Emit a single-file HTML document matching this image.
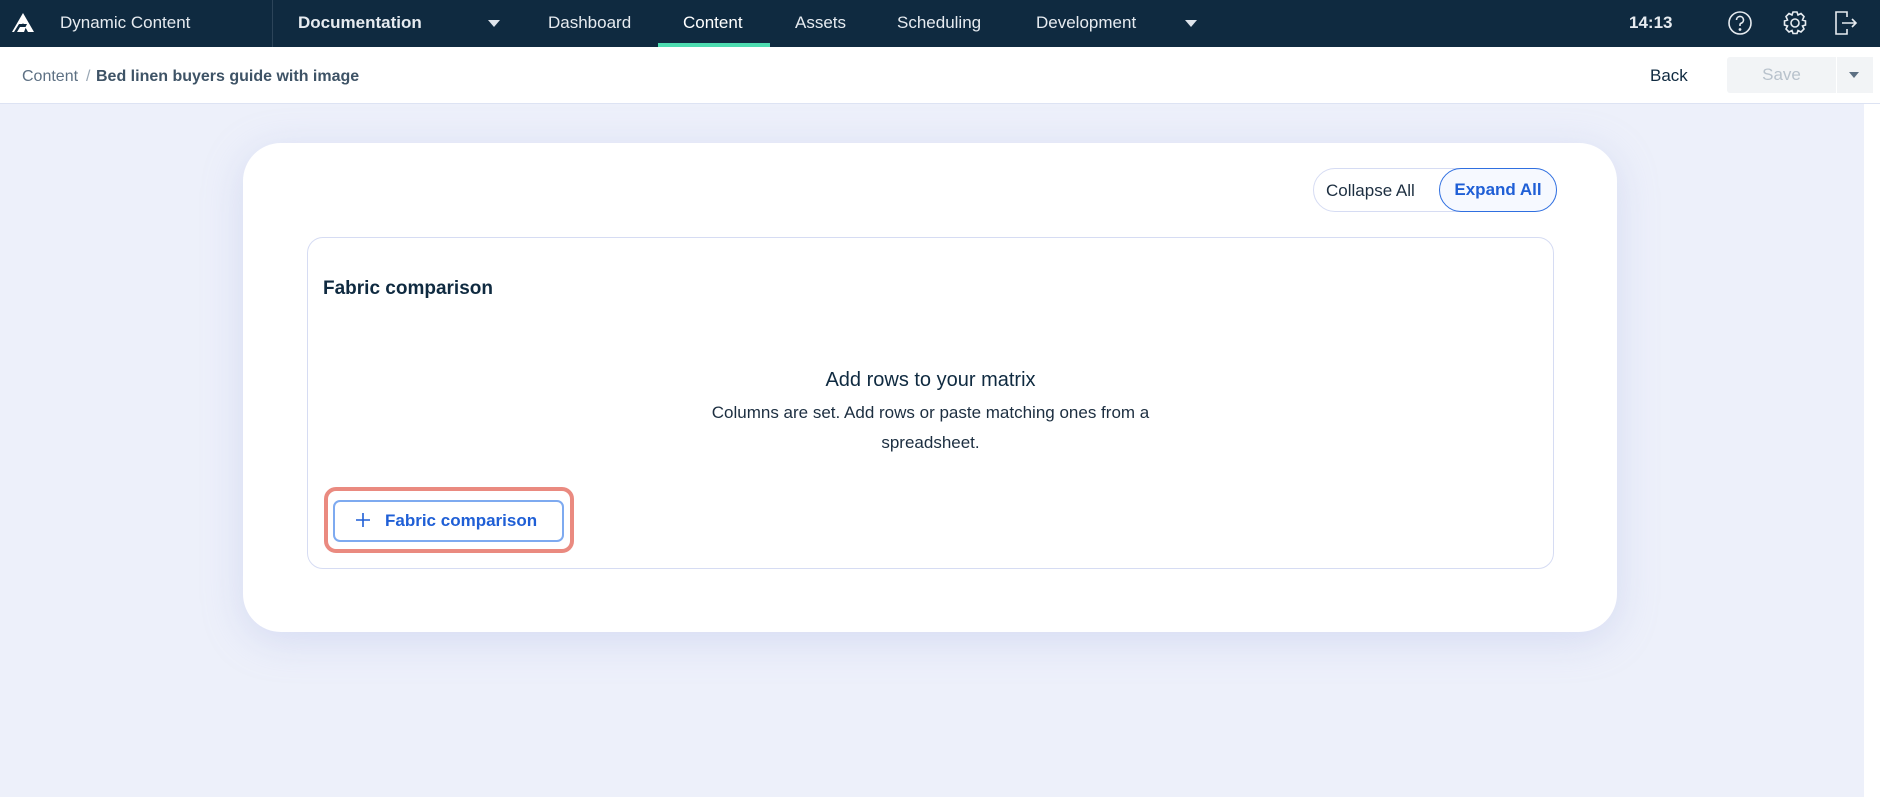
<!DOCTYPE html>
<html><head><style>
*{box-sizing:border-box;margin:0;padding:0}
body{width:1880px;height:797px;overflow:hidden;background:#edf0fa;font-family:"Liberation Sans",sans-serif;position:relative}
.nav{position:absolute;left:0;top:0;width:1880px;height:47px;background:#0f2a40;color:#e6ebf0;font-size:17px}
.nav span{position:absolute;top:13px}
.tri{position:absolute;top:20px;width:0;height:0;border-left:6px solid transparent;border-right:6px solid transparent;border-top:7px solid #dfe5ec}
.bc{position:absolute;left:0;top:47px;width:1880px;height:57px;background:#fff;border-bottom:1px solid #dde3f3}
.card{position:absolute;left:243px;top:143px;width:1374px;height:489px;background:#fff;border-radius:38px;box-shadow:0 8px 40px rgba(170,180,230,.35)}
.box{position:absolute;left:307px;top:237px;width:1247px;height:332px;border:1px solid #d6dcf3;border-radius:16px;background:#fff}
</style></head><body>
<div class="nav">
<svg style="position:absolute;left:11px;top:12px" width="24" height="22" viewBox="0 0 24 22"><path d="M12 1 L23 20 L17 20 L12 11 L7 20 L1 20 Z" fill="#fff"/><path d="M3 20 L8 12 L16 12 L12 20Z" fill="#0f2a40"/><path d="M6 20 L9 15 L15 15 L13 20Z" fill="#fff"/></svg>
<span style="left:60px">Dynamic Content</span>
<div style="position:absolute;left:272px;top:0;width:1px;height:47px;background:#2c4459"></div>
<span style="left:298px;font-weight:bold">Documentation</span>
<div class="tri" style="left:488px"></div>
<span style="left:548px">Dashboard</span>
<span style="left:683px;color:#fff">Content</span>
<div style="position:absolute;left:658px;top:43px;width:112px;height:4px;background:#4ddcb0"></div>
<span style="left:795px">Assets</span>
<span style="left:897px">Scheduling</span>
<span style="left:1036px">Development</span>
<div class="tri" style="left:1185px"></div>
<span style="left:1629px;font-weight:bold">14:13</span>
<svg style="position:absolute;left:1727px;top:10px" width="26" height="26" viewBox="0 0 26 26" fill="none" stroke="#e6ebf0" stroke-width="1.6"><circle cx="13" cy="13" r="11"/><path d="M9.5 10a3.5 3.5 0 1 1 4.5 3.3c-.8.3-1 .8-1 1.7v1"/><circle cx="13" cy="19.5" r=".6" fill="#e6ebf0"/></svg>
<svg style="position:absolute;left:1782px;top:10px" width="26" height="26" viewBox="0 0 26 26" fill="none" stroke="#e6ebf0" stroke-width="1.6"><circle cx="13" cy="13" r="4"/><path d="M11 2h4l1 3 3-1.5 3 3L20.5 10l3 1v4l-3 1 1.5 3-3 3-3-1.5-1 3h-4l-1-3-3 1.5-3-3L5.5 16l-3-1v-4l3-1L4 6.5l3-3L10 5z"/></svg>
<svg style="position:absolute;left:1833px;top:9px" width="26" height="28" viewBox="0 0 26 28" fill="none" stroke="#e6ebf0" stroke-width="1.6"><path d="M14 8V3H3v22h11v-5"/><path d="M9 14h14M19 10l4 4-4 4"/></svg>
</div>
<div class="bc">
<span style="position:absolute;left:22px;top:21px;font-size:16px;color:#5d7083">Content</span>
<span style="position:absolute;left:86px;top:21px;font-size:16px;color:#9aa8b5">/</span>
<span style="position:absolute;left:96px;top:21px;font-size:16px;color:#3e5366;font-weight:bold">Bed linen buyers guide with image</span>
<span style="position:absolute;left:1650px;top:19px;font-size:17px;color:#0f2a40">Back</span>
<div style="position:absolute;left:1727px;top:10px;width:109px;height:36px;background:#f2f4f6;border-radius:3px 0 0 3px;color:#b8c2cc;font-size:17px;text-align:center;line-height:36px">Save</div>
<div style="position:absolute;left:1837px;top:10px;width:36px;height:36px;background:#f2f4f6"><div class="tri" style="left:12px;top:15px;border-top-color:#5d7083;border-left-width:5px;border-right-width:5px;border-top-width:6px"></div></div>
</div>
<div style="position:absolute;left:1864px;top:104px;width:16px;height:693px;background:#fff"></div>
<div class="card"></div>
<div style="position:absolute;left:1313px;top:168px;width:244px;height:44px;border:1px solid #d6dcf3;border-radius:22px;background:#fff"></div>
<span style="position:absolute;left:1326px;top:181px;font-size:17px;color:#1c2e40">Collapse All</span>
<div style="position:absolute;left:1439px;top:168px;width:118px;height:44px;border:1.5px solid #2f6fe0;border-radius:22px;background:#f6f9ff;color:#1f5fd6;font-weight:bold;font-size:17px;text-align:center;line-height:41px">Expand All</div>
<div class="box"></div>
<div style="position:absolute;left:323px;top:278px;font-size:19px;font-weight:bold;color:#0f2a40">Fabric comparison</div>
<div style="position:absolute;left:307px;top:369px;width:1247px;text-align:center;font-size:20px;color:#0f2a40">Add rows to your matrix</div>
<div style="position:absolute;left:307px;top:398px;width:1247px;text-align:center;font-size:17px;line-height:30px;color:#1c2e40">Columns are set. Add rows or paste matching ones from a<br>spreadsheet.</div>
<div style="position:absolute;left:324px;top:487px;width:250px;height:66px;border:4px solid #ea8a80;border-radius:12px"></div>
<div style="position:absolute;left:333px;top:500px;width:231px;height:42px;border:2px solid #7eaaf0;border-radius:7px;background:#fff;color:#1f5fd6;font-weight:bold;font-size:17px;line-height:38px;padding-left:50px">Fabric comparison</div>
<svg style="position:absolute;left:355px;top:512px" width="16" height="16" viewBox="0 0 16 16" stroke="#1f5fd6" stroke-width="1.6"><path d="M8 1v14M1 8h14"/></svg>
</body></html>
